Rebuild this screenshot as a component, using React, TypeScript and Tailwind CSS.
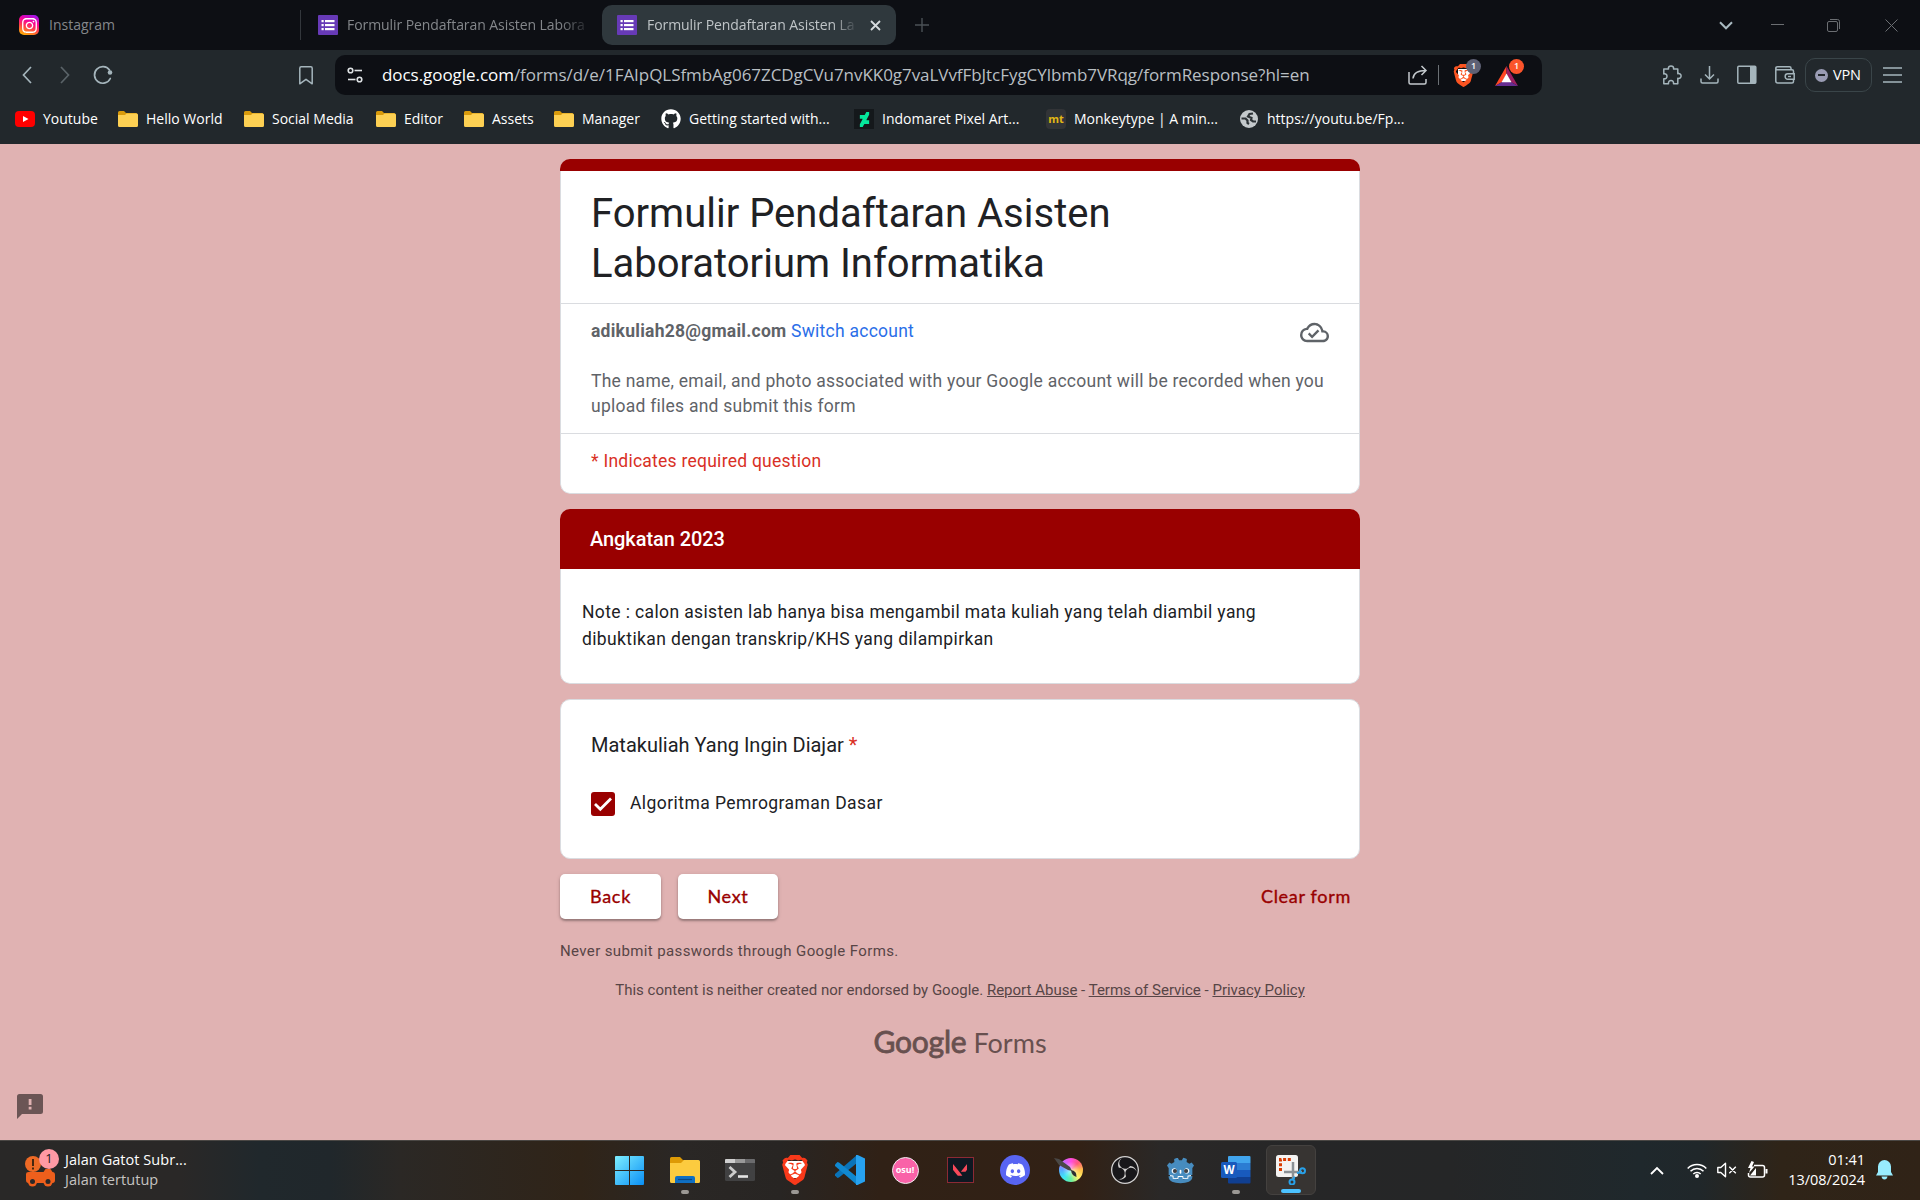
import type { ReactNode } from "react";
import { FaInstagram } from "react-icons/fa";
import { FaGithub } from "react-icons/fa";
import { SiBrave, SiDeviantart, SiDiscord, SiGodotengine, SiObsstudio, SiValorant } from "react-icons/si";

function FormsIcon() {
  return (
    <svg className="h-5 w-5 shrink-0" viewBox="0 0 20 20">
      <rect width="20" height="20" rx="1" fill="#673ab7" />
      <g fill="#fff">
        <rect x="3.5" y="5" width="2.2" height="2.2" /><rect x="7" y="5" width="9.5" height="2.2" />
        <rect x="3.5" y="9" width="2.2" height="2.2" /><rect x="7" y="9" width="9.5" height="2.2" />
        <rect x="3.5" y="13" width="2.2" height="2.2" /><rect x="7" y="13" width="9.5" height="2.2" />
      </g>
    </svg>
  );
}

function TabStrip() {
  return (
    <div className="flex h-[50px] items-center bg-[#0d0f14] text-[14px] text-[#84878b]">
      <div className="flex w-[300px] items-center pl-[19px]">
        <span className="flex h-5 w-5 items-center justify-center rounded-[5px] bg-[linear-gradient(20deg,#ffb400_5%,#ff3d4d_40%,#f5009c_65%,#8a1cff_100%)]">
          <FaInstagram className="text-[17px] text-white" />
        </span>
        <span className="mb-[2px] ml-[10px]">Instagram</span>
      </div>
      <div className="h-[30px] w-px bg-[#33373c]" />
      <div className="flex w-[301px] items-center pl-[17px]">
        <FormsIcon />
        <span className="mb-[2px] ml-[9px] w-[250px] whitespace-nowrap tracking-[-0.07px] [mask-image:linear-gradient(to_right,black_212px,transparent_246px)]">
          Formulir Pendaftaran Asisten Labora
        </span>
      </div>
      <div className="flex h-10 w-[294px] items-center rounded-[10px] bg-[#2f383d] pl-[15px] text-[#bfc4c7]">
        <FormsIcon />
        <span className="mb-[2px] ml-[10px] w-[212px] whitespace-nowrap tracking-[-0.07px] [mask-image:linear-gradient(to_right,black_186px,transparent_211px)]">
          Formulir Pendaftaran Asisten La
        </span>
        <svg className="ml-[11px] h-[11px] w-[11px]" viewBox="0 0 11 11"><path d="M1 1l9 9M10 1l-9 9" stroke="#d5dadd" strokeWidth="1.8" /></svg>
      </div>
      <svg className="ml-[19px] h-[14px] w-[14px]" viewBox="0 0 14 14"><path d="M7 0v14M0 7h14" stroke="#4b5156" strokeWidth="1.4" /></svg>
      <div className="ml-auto flex items-center">
        <svg className="h-[9px] w-[14px]" viewBox="0 0 14 9"><path d="M1 1.3l6 6 6-6" fill="none" stroke="#a9bac1" strokeWidth="2" /></svg>
        <svg className="ml-[38px] h-3 w-[13px]" viewBox="0 0 13 12"><path d="M0 5.5h13" stroke="#6b6e72" /></svg>
        <svg className="ml-[43px] h-[13px] w-[13px]" viewBox="0 0 13 13"><g fill="none" stroke="#6b6e72"><rect x=".5" y="2.5" width="10" height="10" rx="1.5" /><path d="M3 .5h7.5a2 2 0 0 1 2 2V10" /></g></svg>
        <svg className="ml-[45px] mr-[22px] h-[13px] w-[13px]" viewBox="0 0 13 13"><path d="M.5.5l12 12M12.500.5l-12 12" stroke="#6b6e72" /></svg>
      </div>
    </div>
  );
}

function Badge({ className }: { className: string }) {
  return <span className={"absolute flex h-[15px] w-[15px] items-center justify-center rounded-full text-[9px] font-semibold text-white " + className}>1</span>;
}

function AddressRow() {
  return (
    <div className="flex h-[50px] items-center">
      <svg className="ml-[22px] h-[18px] w-[10px]" viewBox="0 0 10 18"><path d="M9 1L1.500 9 9 17" fill="none" stroke="#a5b5bc" strokeWidth="1.7" /></svg>
      <svg className="ml-[28px] h-[18px] w-[10px]" viewBox="0 0 10 18"><path d="M1 1l7.500 8L1 17" fill="none" stroke="#5a6368" strokeWidth="1.7" /></svg>
      <svg className="ml-[23px] h-5 w-5" viewBox="0 0 20 20"><path d="M17.300 13.500A8.300 8.300 0 1 1 16.500 5" fill="none" stroke="#a5b5bc" strokeWidth="1.7" strokeLinecap="round" /><circle cx="17" cy="7.500" r="2.300" fill="#a5b5bc" /></svg>
      <svg className="ml-[186px] h-[19px] w-[14px]" viewBox="0 0 14 19"><path d="M.8 17.800V2.200Q.8.800 2.200.800h9.600q1.400 0 1.400 1.400v15.600L7 13.300z" fill="none" stroke="#a5b5bc" strokeWidth="1.5" strokeLinejoin="round" /></svg>
      <div className="ml-[22px] flex h-10 w-[1207px] items-center rounded-[10px] bg-[#0d0f14]">
        <svg className="ml-[12px] h-4 w-4" viewBox="0 0 16 16"><g fill="none" stroke="#dfe3e5" strokeWidth="1.6"><circle cx="3.500" cy="3.500" r="2.300" /><path d="M7.500 3.500H15" /><circle cx="12.500" cy="12.500" r="2.300" /><path d="M1 12.500h7.500" /></g></svg>
        <span className="mb-px ml-[19px] w-[1026px] whitespace-nowrap text-[17px] tracking-[-0.05px] text-[#b9bfc3]"><span className="text-white">docs.google.com</span>/forms/d/e/1FAIpQLSfmbAg067ZCDgCVu7nvKK0g7vaLVvfFbJtcFygCYlbmb7VRqg/formResponse?hl=en</span>
        <svg className="h-5 w-5 shrink-0" viewBox="0 0 20 20"><g fill="none" stroke="#c3c9cd" strokeWidth="1.500"><path d="M1 7v10.500q0 1.500 1.500 1.500h14q1.500 0 1.500-1.500V14" /><path d="M5 13.500Q5.500 5.500 18 5.500M13.500 1l4.500 4.500L13.500 10" /></g></svg>
        <div className="ml-[10px] h-5 w-px bg-[#6b7075]" />
        <div className="relative ml-[15px] h-[23px] w-[20px]">
          <div className="absolute left-[4px] top-[5px] h-[12px] w-[12px] bg-white" />
          <SiBrave className="absolute left-[-2px] top-0 text-[23px] text-[#fb5421]" />
          <Badge className="left-[12px] top-[-5px] bg-[#5e6175]" />
        </div>
        <div className="relative ml-[21px] h-[23px] w-[23px]">
          <svg className="h-[23px] w-[23px]" viewBox="0 0 23 23"><path d="M11.500 2L0 22l7-4 4.500-8z" fill="#ff4724" /><path d="M11.500 2L23 22l-7-4-4.500-8z" fill="#9e1f63" /><path d="M0 22h23l-7-4H7z" fill="#662d91" /><path d="M11.500 9.500L6.500 18.200h10z" fill="#fff" /></svg>
          <Badge className="left-[14px] top-[-5px] bg-[#fb542b]" />
        </div>
      </div>
      <div className="ml-[120px] flex items-center">
        <svg className="h-5 w-5" viewBox="0 0 20 20"><path d="M1.800 4H6.500C6 1.800 7.500.900 9 .9s3 .9 2.500 3.100h4.300v4.700c2.200-.4 3.300.9 3.300 2.300s-1.100 2.700-3.300 2.300v5.500H11.500c.3-2.300-1-3.300-2.500-3.300s-2.800 1-2.500 3.300H1.800v-5c2.300.3 3.200-1.100 3.200-2.500S4 8.500 1.800 8.900z" fill="none" stroke="#a5b5bc" strokeWidth="1.500" strokeLinejoin="round" /></svg>
        <svg className="ml-[18px] h-5 w-5" viewBox="0 0 20 20"><path d="M9.500 1v13M5 9.500L9.500 14 14 9.500M1 13.500v3q0 1.500 1.500 1.500h14q1.500 0 1.500-1.500v-3" fill="none" stroke="#a5b5bc" strokeWidth="1.500" /></svg>
        <svg className="ml-[17px] h-5 w-5" viewBox="0 0 20 20"><rect x=".8" y="1.300" width="18" height="17" rx="1" fill="none" stroke="#a5b5bc" strokeWidth="1.500" /><rect x="13" y="1.300" width="6" height="17" fill="#a5b5bc" /></svg>
        <svg className="ml-[18px] h-5 w-5" viewBox="0 0 20 20"><g fill="none" stroke="#a5b5bc" strokeWidth="1.500"><path d="M16 4.700V3.200q0-1.500-1.500-1.500h-12Q.8 1.700.8 3.200t1.700 1.500H17q1.500 0 1.500 1.500V9M.8 3v13q0 2 2 2H17q1.500 0 1.500-1.500v-2" /><path d="M19.200 8.800h-6.500a2.500 2.500 0 0 0-2.500 2.500v.5a2.500 2.500 0 0 0 2.500 2.500h6.500z" /></g><path d="M13 11.500h3" stroke="#a5b5bc" strokeWidth="1.300" /></svg>
        <div className="ml-[10px] flex h-[34px] w-[67px] items-center rounded-[10px] border border-[#3a4549] pl-[9px]">
          <span className="flex h-[13px] w-[13px] items-center justify-center rounded-full bg-[#9a9cb4]"><span className="h-[2px] w-[7px] bg-[#23282c]" /></span>
          <span className="mb-px ml-[5px] text-[14.500px] tracking-[-0.2px] text-white">VPN</span>
        </div>
        <svg className="ml-[11px] h-4 w-[19px]" viewBox="0 0 19 16"><path d="M0 1h19M0 8h19M0 15h19" stroke="#a5b5bc" strokeWidth="1.600" /></svg>
      </div>
    </div>
  );
}

function Folder() {
  return (
    <svg className="h-5 w-5" viewBox="0 0 20 20">
      <path d="M0 3.500Q0 2 1.500 2H6l2 2h10q1.500 0 1.500 1.500v5H0z" fill="#d99a0b" />
      <path d="M0 6h7l1.500-1.500H18.500Q20 4.500 20 6v10.500q0 1.500-1.500 1.500h-17Q0 18 0 16.500z" fill="#fdd053" />
    </svg>
  );
}

function Bookmark({ icon, width, children }: { icon: ReactNode; width: string; children: ReactNode }) {
  return (
    <div className={"flex items-center gap-[8px] " + width}>
      <span className="flex h-5 w-5 shrink-0 items-center justify-center">{icon}</span>
      <span className="mb-[2px] whitespace-nowrap">{children}</span>
    </div>
  );
}

function BookmarkBar() {
  return (
    <div className="flex h-[38px] items-center pl-[15px] text-[14px] text-white">
      <Bookmark width="w-[103px]" icon={<svg className="h-5 w-5" viewBox="0 0 20 20"><rect y="2" width="20" height="16" rx="4" fill="#f00" /><path d="M8 7l5.500 3L8 13z" fill="#fff" /></svg>}>Youtube</Bookmark>
      <Bookmark width="w-[126px]" icon={<Folder />}>Hello World</Bookmark>
      <Bookmark width="w-[132px]" icon={<Folder />}>Social Media</Bookmark>
      <Bookmark width="w-[88px]" icon={<Folder />}>Editor</Bookmark>
      <Bookmark width="w-[90px]" icon={<Folder />}>Assets</Bookmark>
      <Bookmark width="w-[107px]" icon={<Folder />}>Manager</Bookmark>
      <Bookmark width="w-[193px]" icon={<FaGithub className="h-5 w-5" />}>Getting started with...</Bookmark>
      <Bookmark width="w-[192px]" icon={<span className="flex h-5 w-5 items-center justify-center bg-[#14181b]"><SiDeviantart className="text-[15px] text-[#05e79c]" /></span>}>Indomaret Pixel Art...</Bookmark>
      <Bookmark width="w-[193px]" icon={<span className="flex h-5 w-5 items-center justify-center rounded-[4px] bg-[#323437] text-[11px] font-bold text-[#e2b714]">mt</span>}>Monkeytype | A min...</Bookmark>
      <Bookmark width="w-[180px]" icon={<svg className="h-[18px] w-[18px]" viewBox="0 0 18 18"><circle cx="9" cy="9" r="9" fill="#c4c9cc" /><path d="M1.500 8.500h4l2 2v2.500l1.500 1M16 11.500h-3l-2-1.500.5-2L8 6.500 9.500 4 13 3.500" fill="none" stroke="#2c3236" strokeWidth="2.200" /></svg>}>https://youtu.be/Fp...</Bookmark>
    </div>
  );
}

function FormPage() {
  return (
    <main className="flex h-[996px] flex-col items-center bg-[#e0b2b2] pt-[15px] font-[Roboto,sans-serif] text-[#202124]">
      <div className="flex w-[800px] flex-col">
        <section className="h-[335px] overflow-hidden rounded-[10px]">
          <div className="h-3 bg-[#990000]" />
          <div className="h-[323px] rounded-b-[10px] border border-t-0 border-[#dadce0] bg-white">
            <h1 className="h-[133px] whitespace-nowrap border-b border-[#dadce0] px-[30px] pt-[18px] text-[40px] leading-[50px]">
              Formulir Pendaftaran Asisten<br />Laboratorium Informatika
            </h1>
            <div className="h-[130px] border-b border-[#dadce0] px-[30px] pt-[15px] text-[17.500px] leading-[25px] tracking-[0.25px] text-[#5f6368]">
              <div className="flex justify-between">
                <p><span className="font-bold">adikuliah28@gmail.com</span> <span className="text-[#2a6ee8]">Switch account</span></p>
                <svg className="mt-[-1px] h-[29px] w-[29px]" viewBox="0 0 24 24" fill="#5f6368"><path d="M19.350 10.040A7.490 7.490 0 0 0 12 4C9.110 4 6.600 5.640 5.350 8.040A5.994 5.994 0 0 0 0 14c0 3.310 2.690 6 6 6h13c2.760 0 5-2.240 5-5 0-2.640-2.050-4.780-4.650-4.960zM19 18H6c-2.210 0-4-1.790-4-4 0-2.050 1.530-3.760 3.560-3.970l1.070-.11.5-.95A5.469 5.469 0 0 1 12 6c2.620 0 4.880 1.860 5.390 4.430l.3 1.500 1.530.11A2.980 2.980 0 0 1 22 15c0 1.650-1.350 3-3 3zm-9-3.820l-2.090-2.090L6.500 13.500 10 17l6.010-6.010-1.410-1.410z" /></svg>
              </div>
              <p className="mt-[22px] whitespace-nowrap">The name, email, and photo associated with your Google account will be recorded when you<br />upload files and submit this form</p>
            </div>
            <p className="px-[30px] pt-[15px] text-[17.500px] leading-[25px] tracking-[0.25px] text-[#d93025]">* Indicates required question</p>
          </div>
        </section>

        <section className="mt-[15px] h-[175px] overflow-hidden rounded-[10px]">
          <h2 className="h-[60px] bg-[#990000] pl-[30px] pt-[15px] text-[20px] font-medium leading-[30px] tracking-[-0.07px] text-white">Angkatan 2023</h2>
          <p className="h-[115px] whitespace-nowrap rounded-b-[10px] border border-t-0 border-[#dadce0] bg-white pl-[21px] pt-[30px] text-[17.500px] leading-[27px] tracking-[0.375px]">Note : calon asisten lab hanya bisa mengambil mata kuliah yang telah diambil yang<br />dibuktikan dengan transkrip/KHS yang dilampirkan</p>
        </section>

        <section className="mt-[15px] h-[160px] rounded-[10px] border border-[#dadce0] bg-white px-[30px] pt-[30px]">
          <h3 className="text-[20px] leading-[30px]">Matakuliah Yang Ingin Diajar <span className="text-[#d93025]">*</span></h3>
          <div className="mt-[31px] flex h-[26px] items-center">
            <span className="flex h-6 w-6 items-center justify-center rounded-[3px] bg-[#990000]">
              <svg className="h-[18px] w-5" viewBox="0 0 20 18"><path d="M2 9l5.300 5.300L18 3.500" fill="none" stroke="#fff" strokeWidth="2.800" /></svg>
            </span>
            <span className="mb-[2px] ml-[15px] text-[17.500px] tracking-[0.43px]">Algoritma Pemrograman Dasar</span>
          </div>
        </section>

        <div className="mt-[15px] flex h-[45px] items-center gap-[17px] font-[Lato,sans-serif] text-[18px] tracking-[0.7px] text-[#990000] [-webkit-text-stroke:0.35px_#990000]">
          <button className="h-[45px] w-[101px] rounded-[5px] bg-white shadow-[0_2px_2px_rgba(0,0,0,0.25),0_1px_4px_rgba(0,0,0,0.15)]">Back</button>
          <button className="h-[45px] w-[100px] rounded-[5px] bg-white shadow-[0_2px_2px_rgba(0,0,0,0.25),0_1px_4px_rgba(0,0,0,0.15)]">Next</button>
          <button className="ml-auto mr-[9px] whitespace-nowrap">Clear form</button>
        </div>

        <p className="mt-[22px] text-[15px] leading-[20px] tracking-[0.375px] text-[#574546]">Never submit passwords through Google Forms.</p>
        <p className="mt-[19px] whitespace-nowrap text-center text-[15px] leading-[20px] text-[#574546]">
          This content is neither created nor endorsed by Google. <a className="underline">Report Abuse</a> - <a className="underline">Terms of Service</a> - <a className="underline">Privacy Policy</a>
        </p>
        <div className="mt-[19px] flex h-[44px] items-baseline justify-center gap-[7px] whitespace-nowrap font-[Lato,sans-serif] leading-[44px] text-[#68504f]">
          <span className="text-[30px] tracking-[-0.2px] [-webkit-text-stroke:0.8px_#68504f]">Google</span>
          <span className="text-[27px]">Forms</span>
        </div>
      </div>
      <div className="mt-auto w-full pb-[20px] pl-[17px]">
        <svg className="h-[26px] w-[27px]" viewBox="0 0 27 26"><path d="M0 2.500Q0 0 2.500 0h21Q26 0 26 2.500v15Q26 20 23.500 20H5l-5 5z" fill="#6b5555" /><path d="M11.700 5h2.800v6h-2.800zM11.700 12.700h2.800v2.800h-2.800z" fill="#e0b2b2" /></svg>
      </div>
    </main>
  );
}

function Slot({ children, mark }: { children: ReactNode; mark?: boolean }) {
  return (
    <div className="relative flex h-[60px] w-[55.100px] items-center justify-center pb-px">
      {children}
      {mark && <span className="absolute bottom-[7px] h-1 w-2 rounded-full bg-[#9b9894]" />}
    </div>
  );
}

function Taskbar() {
  return (
    <footer className="flex h-[60px] items-center border-t border-[#4a4744] bg-[linear-gradient(to_right,#292827_0px,#2a2827_180px,#20282c_260px,#20272b_330px,#2b2825_400px,#302418_580px,#2a2725_680px,#282523_780px,#302116_880px,#322115_1080px,#2a2827_1160px,#262627_1300px,#252627_1450px,#1f282c_1640px,#20272a_1700px,#2f2418_1780px,#302317_1920px)] text-white">
      <div className="flex w-[602px] items-center">
        <div className="relative mb-[2px] ml-[25px] h-[40px] w-[40px]">
          <svg className="h-full w-full" viewBox="0 0 40 40"><circle cx="8" cy="14" r="8" fill="#ee6a25" /><path d="M8 9v7M8 17.500v2" stroke="#33210f" strokeWidth="1.800" /><path d="M1 24q0-2 2.500-2h15l2-3h5l2 3q2.500 0 2.500 3v5q0 3-2.500 3H3.500Q1 33 1 30z" fill="#ee5f1c" /><circle cx="7.500" cy="32" r="4.500" fill="#ee5f1c" /><circle cx="23" cy="32" r="4.500" fill="#ee5f1c" /><circle cx="7.500" cy="31.500" r="2.500" fill="#2b2828" /><circle cx="23" cy="31.500" r="2.500" fill="#2b2828" /></svg>
          <span className="absolute left-[14px] top-[-1px] flex h-[20px] w-[20px] items-center justify-center rounded-full bg-[#ff99a4] text-[13px] text-[#221a1b]">1</span>
        </div>
        <div className="mb-[2px] text-[14.500px] leading-[20px] tracking-[0.05px]"><p>Jalan Gatot Subr...</p><p className="text-[#c6c4c2]">Jalan tertutup</p></div>
      </div>
      <Slot><svg className="h-[29px] w-[29px]" viewBox="0 0 29 29"><defs><linearGradient id="win" gradientUnits="userSpaceOnUse" x1="0" y1="0" x2="29" y2="29"><stop stopColor="#7deeff" /><stop offset="1" stopColor="#0a8ff5" /></linearGradient></defs><path d="M0 1q0-1 1-1h13v14H0zM15 0h13q1 0 1 1v13H15zM0 15h14v14H1q-1 0-1-1zM15 15h14v13q0 1-1 1H15z" fill="url(#win)" /></svg></Slot>
      <Slot mark><svg className="h-[28px] w-[30px]" viewBox="0 0 30 28"><path d="M0 2.500Q0 1 1.500 1H10l3 3h8v6H0z" fill="#dd9a06" /><path d="M0 7h11l3-3h14.500Q30 4 30 5.500v20q0 1.500-1.500 1.500h-27Q0 27 0 25.500z" fill="#fccb3f" /><path d="M5 27v-5q0-2 2-2h16q2 0 2 2v5z" fill="#0f6fc3" /><path d="M8 23.500h14" stroke="#0a4784" strokeWidth="1.200" /></svg></Slot>
      <Slot><svg className="h-[22px] w-[30px]" viewBox="0 0 30 22"><rect width="30" height="22" rx="1.500" fill="#414142" /><path d="M1 0h9v4H0V1q0-1 1-1z" fill="#cfcfcf" /><path d="M10 0h10v4H10z" fill="#999" /><path d="M20 0h9q1 0 1 1v3H20z" fill="#6b6b6d" /><path d="M4.500 8l5.500 5-5.500 5" fill="none" stroke="#ccc" strokeWidth="2.800" /><path d="M13 17.500h10" stroke="#e4e4e4" strokeWidth="2.600" /></svg></Slot>
      <Slot mark>
        <div className="relative h-[30px] w-[30px]">
          <div className="absolute left-[5px] top-[6px] h-[17px] w-[20px] rounded-b-[8px] bg-white" />
          <SiBrave className="absolute left-0 top-0 text-[30px] text-[#f8391a]" />
        </div>
      </Slot>
      <Slot><svg className="h-[30px] w-[30px]" viewBox="0 0 30 30"><path d="M22 0v8L4 22.500 2.500 23 0 20.500V19z" fill="#0a73b8" /><path d="M0 9.500L2.500 7 4 7.500 22 22v8L0 11z" fill="#1088d0" /><path d="M21 30V0l1.500-.1L30 3.500v23L22.500 30z" fill="#27a2f0" /></svg></Slot>
      <Slot><span className="flex h-[27px] w-[27px] items-center justify-center rounded-full border-[1.500px] border-[#eee] bg-[#f962a8] pb-px text-[9px] font-bold">osu!</span></Slot>
      <Slot><span className="flex h-[26px] w-[27px] items-center justify-center border border-[#8c2a35] bg-[#0e1822]"><SiValorant className="text-[14px] text-[#f7495a]" /></span></Slot>
      <Slot><span className="flex h-[30px] w-[30px] items-center justify-center rounded-full bg-[#5865f2]"><SiDiscord className="text-[19px]" /></span></Slot>
      <Slot>
        <div className="relative h-[26px] w-[26px]">
          <div className="absolute left-[2px] top-[1px] h-[24px] w-[24px] rounded-full bg-[radial-gradient(circle,#ffffff99,transparent_50%),conic-gradient(from_0deg,#ff4be0,#ff5a7a,#ffc04a,#fff36b,#66f0a0,#3fe6f5,#58a8ff,#c46bff,#ff4be0)]" />
          <svg className="absolute left-[-3px] top-0 h-[26px] w-[28px]" viewBox="0 0 28 26"><path d="M0 1l5 1 11 8 2 4-4-1L5 8z" fill="#4a4846" /><path d="M17 13q6 1 5.500 7-5-1.500-5.500-7z" fill="#2c3032" /></svg>
        </div>
      </Slot>
      <Slot><span className="flex h-[28px] w-[28px] items-center justify-center rounded-full bg-[#18171a]"><SiObsstudio className="text-[28px] text-[#d4d2d1]" /></span></Slot>
      <Slot>
        <div className="relative h-[27px] w-[27px]">
          <div className="absolute left-[3px] top-[10px] h-[12px] w-[21px] bg-white" />
          <SiGodotengine className="absolute left-0 top-0 text-[27px] text-[#478cbf]" />
          <span className="absolute left-[6px] top-[12px] h-[4px] w-[4px] rounded-full bg-[#414042]" />
          <span className="absolute right-[6px] top-[12px] h-[4px] w-[4px] rounded-full bg-[#414042]" />
        </div>
      </Slot>
      <Slot mark>
        <svg className="h-[28px] w-[30px]" viewBox="0 0 30 28"><path d="M7 1q0-1 1-1h20.500q1 0 1 1v6H7z" fill="#41a5ee" /><path d="M7 7h22.500v7H7z" fill="#2b7cd3" /><path d="M7 14h22.500v7H7z" fill="#185abd" /><path d="M7 21h22.500v5.500q0 1-1 1H8q-1 0-1-1z" fill="#103f91" /><rect y="6" width="16" height="16" rx="1.500" fill="#185abd" /><text x="8" y="18" textAnchor="middle" fill="#fff" fontSize="11.500" fontWeight="700">W</text></svg>
      </Slot>
      <div className="relative mb-px ml-[3px] flex h-[50px] w-[50px] items-center justify-center rounded-[6px] border border-[#44413f] bg-[#373432]">
        <svg className="h-[30px] w-[30px]" viewBox="0 0 30 30"><rect width="22" height="22" rx="2.500" fill="#f4f3f2" /><path d="M4.500 16V4.500H16" fill="none" stroke="#d83b01" strokeWidth="3" strokeDasharray="3 1.700" /><path d="M17 7v17M8 17h18" stroke="#8a9095" strokeWidth="2.500" /><circle cx="26.500" cy="15.800" r="2.500" fill="none" stroke="#28a0e8" strokeWidth="2" /><circle cx="16" cy="27" r="2.500" fill="none" stroke="#28a0e8" strokeWidth="2" /><path d="M17.500 24.500l1-3M24 17.500l-3 .5" stroke="#28a0e8" strokeWidth="2" /></svg>
        <span className="absolute bottom-px h-1 w-5 rounded-full bg-[#4cc2ff]" />
      </div>
      <div className="ml-auto flex items-center pb-px">
        <svg className="h-[9px] w-[14px]" viewBox="0 0 14 9"><path d="M1 8l6-6 6 6" fill="none" stroke="#fff" strokeWidth="1.800" /></svg>
        <svg className="ml-[23px] h-[16px] w-[20px]" viewBox="0 0 20 16"><g fill="none" stroke="#fff" strokeWidth="1.500"><path d="M.7 6.500a13 13 0 0 1 18.600 0M3.500 9.200a9 9 0 0 1 13 0M6.300 12a5.200 5.200 0 0 1 7.400 0" /></g><circle cx="10" cy="14" r="2" fill="#fff" /></svg>
        <svg className="ml-[10px] h-[16px] w-[20px]" viewBox="0 0 20 16"><path d="M.8 5.500h3L8.500 1.300v13.400L3.800 10.500h-3zM12.300 4.800l6.500 6.500M18.800 4.800l-6.500 6.500" fill="none" stroke="#fff" strokeWidth="1.400" strokeLinejoin="round" /></svg>
        <svg className="ml-[10px] h-[18px] w-[21px]" viewBox="0 0 21 18"><path d="M7 4.500h8.500q2 0 2 2V14q0 2-2 2h-12q-2 0-2-2v-2" fill="none" stroke="#fff" strokeWidth="1.500" /><path d="M18.500 8h2v4.500h-2zM4.500 0L1 7h2.500L2 12l5.500-6.500H5L7 1zM3 14.500L9 7v7.500z" fill="#fff" /></svg>
        <div className="ml-[17px] w-[80px] whitespace-nowrap text-right text-[14.500px] leading-[20px] tracking-[-0.02px]"><p>01:41</p><p>13/08/2024</p></div>
        <svg className="ml-[11px] mr-[27px] h-[20px] w-[17px]" viewBox="0 0 17 20"><path d="M2 6.500a6.500 6.500 0 0 1 13 0V12l2 3.500H0L2 12zM5.500 16.500h6q-.5 3-3 3t-3-3z" fill="#98ecfe" /></svg>
      </div>
    </footer>
  );
}

export default function App() {
  return (
    <div className="flex h-[1200px] w-[1920px] flex-col overflow-hidden font-['Open_Sans',sans-serif]">
      <header className="h-[144px] bg-[#22282c]">
        <TabStrip />
        <AddressRow />
        <BookmarkBar />
      </header>
      <FormPage />
      <Taskbar />
    </div>
  );
}
